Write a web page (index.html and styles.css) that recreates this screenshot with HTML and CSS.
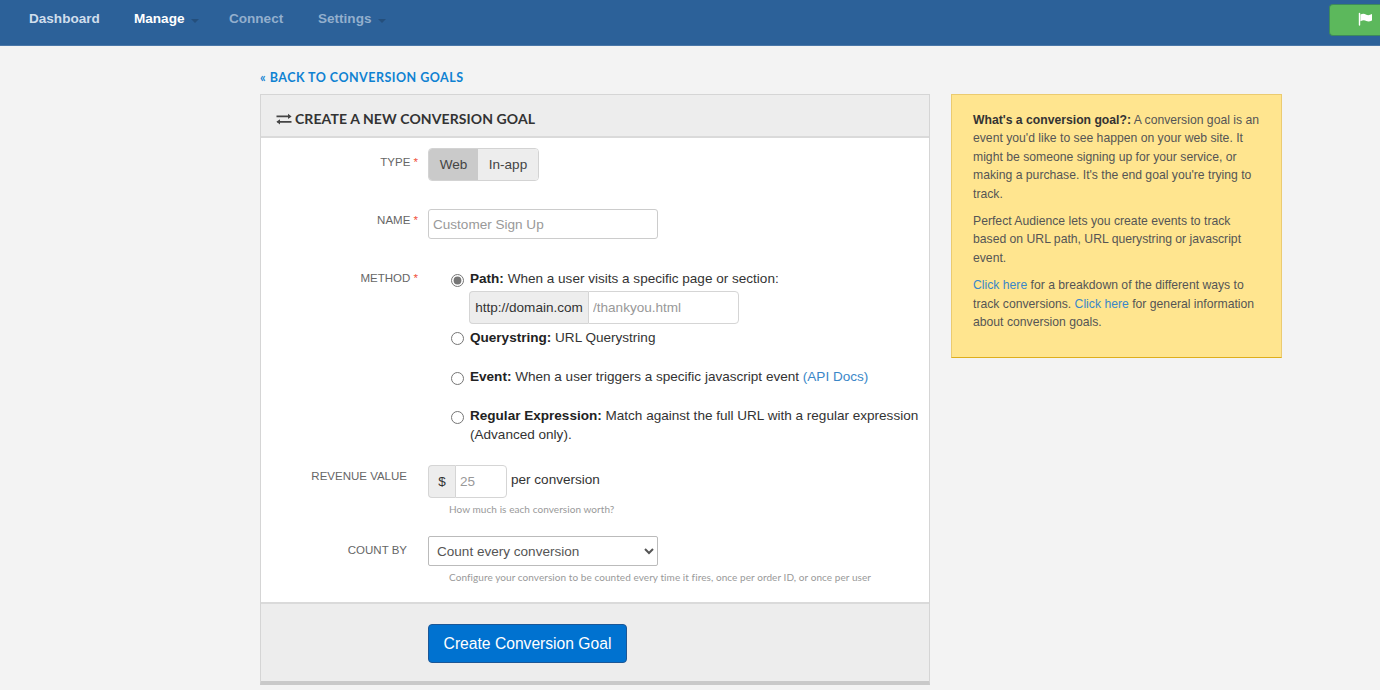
FILE: index.html
```html
<!DOCTYPE html>
<html lang="en">
<head>
  <meta charset="UTF-8" />
  <meta name="viewport" content="width=device-width, initial-scale=1.0"/>
  <title>Create a New Conversion Goal</title>
  <link rel="stylesheet" href="styles.css">
</head>
<body>

  <header class="navbar">
    <nav class="nav-links">
      <a class="nav-dashboard">Dashboard</a>
      <a class="nav-manage">Manage <span class="caret"></span></a>
      <a class="nav-connect">Connect</a>
      <a class="nav-settings">Settings <span class="caret"></span></a>
    </nav>
    <a class="flag-btn">
      <svg width="15" height="14" viewBox="0 0 15 14">
        <path d="M1.5 1.5V13" stroke="#fff" stroke-width="1.4" stroke-linecap="round"/>
        <path d="M2.4 2.6C5 1.3 6.5 1.8 8.3 2.7C10 3.5 11.8 3.1 14 2.1V8.4C11.8 9.6 10 9.8 8.3 9C6.5 8.1 5 8.1 2.4 9.2Z" fill="#fff"/>
      </svg>
    </a>
  </header>

  <main class="page">
    <div class="main-col">
      <a class="back-link">« Back to Conversion Goals</a>

      <form class="panel">
        <div class="panel-header">
          <svg class="exchange" width="16" height="12" viewBox="0 0 16 12">
            <path d="M0.5 3.4H14M1.5 8.8H15.5" stroke="#444" stroke-width="1.8" fill="none"/>
            <path d="M12 0.8L15.6 3.4L12 6ZM4 6.2L0.4 8.8L4 11.4Z" fill="#444"/>
          </svg>
          <h2>Create a New Conversion Goal</h2>
        </div>

        <div class="panel-body">
          <div class="row row-type">
            <label>Type <span class="star">*</span></label>
            <div class="btn-group">
              <button type="button" class="active">Web</button>
              <button type="button">In-app</button>
            </div>
          </div>

          <div class="row row-name">
            <label for="goal-name">Name <span class="star">*</span></label>
            <input type="text" id="goal-name" class="field" placeholder="Customer Sign Up" />
          </div>

          <div class="row row-method">
            <label>Method <span class="star">*</span></label>
            <div class="options">
              <div class="option option-path">
                <input type="radio" name="method" checked />
                <div>
                  <p><b>Path:</b> When a user visits a specific page or section:</p>
                  <div class="input-group">
                    <span class="addon">http://domain.com</span>
                    <input type="text" class="path-input" placeholder="/thankyou.html" />
                  </div>
                </div>
              </div>
              <div class="option">
                <input type="radio" name="method" />
                <p><b>Querystring:</b> URL Querystring</p>
              </div>
              <div class="option">
                <input type="radio" name="method" />
                <p><b>Event:</b> When a user triggers a specific javascript event <a>(API Docs)</a></p>
              </div>
              <div class="option">
                <input type="radio" name="method" />
                <p><b>Regular Expression:</b> Match against the full URL with a regular expression<br>(Advanced only).</p>
              </div>
            </div>
          </div>

          <div class="row row-revenue">
            <label class="optional">Revenue Value</label>
            <div>
              <div class="revenue">
                <div class="input-group">
                  <span class="addon">$</span>
                  <input type="text" class="revenue-input" placeholder="25" />
                </div>
                <span class="per">per conversion</span>
              </div>
              <p class="help">How much is each conversion worth?</p>
            </div>
          </div>

          <div class="row row-count">
            <label class="optional">Count By</label>
            <div>
              <select class="field">
                <option>Count every conversion</option>
              </select>
              <p class="help">Configure your conversion to be counted every time it fires, once per order ID, or once per user</p>
            </div>
          </div>
        </div>

        <div class="panel-footer">
          <button type="submit" class="submit-btn">Create Conversion Goal</button>
        </div>
      </form>
    </div>

    <aside class="tip">
      <p><b>What's a conversion goal?:</b> A conversion goal is an<br>event you'd like to see happen on your web site. It<br>might be someone signing up for your service, or<br>making a purchase. It's the end goal you're trying to<br>track.</p>
      <p>Perfect Audience lets you create events to track<br>based on URL path, URL querystring or javascript<br>event.</p>
      <p><a>Click here</a> for a breakdown of the different ways to<br>track conversions. <a>Click here</a> for general information<br>about conversion goals.</p>
    </aside>
  </main>

</body>
</html>
```
FILE: styles.css
```css
* {
  margin: 0;
  padding: 0;
  box-sizing: border-box;
}

body {
  background: #f3f3f3;
  color: #333;
  font-family: "Liberation Sans", Arial, sans-serif;
  font-size: 13.55px;
  line-height: 18.4px;
  height: 690px;
  overflow: hidden;
}

input,
select,
button {
  font-family: inherit;
  font-size: inherit;
  color: #555;
}

a {
  color: #3a87c8;
  white-space: nowrap;
}

p {
  white-space: nowrap;
}

.navbar {
  display: flex;
  justify-content: space-between;
  height: 46px;
  background: #2c6199;
  border-bottom: 1px solid #4a77a8;
}

.nav-links {
  display: flex;
  padding: 10px 0 0 29px;
  font-weight: bold;
}

.nav-links a {
  color: #93afcd;
}

.nav-links .nav-dashboard {
  width: 105px;
  color: #d0deec;
}

.nav-links .nav-manage {
  width: 95px;
  color: #fff;
}

.nav-links .nav-connect {
  width: 89px;
}

.caret {
  display: inline-block;
  margin-left: 3px;
  border: 4px solid transparent;
  border-top-color: #244f7c;
  border-bottom: 0;
  vertical-align: 0;
}

.flag-btn {
  width: 51px;
  height: 32px;
  margin-top: 4px;
  padding: 7px 0 0 28px;
  background: #5cb85c;
  border: 1px solid #3d8a5c;
  border-right: 0;
  border-radius: 4px 0 0 4px;
}

.flag-btn svg {
  display: block;
}

.page {
  display: flex;
  align-items: flex-start;
  gap: 21px;
  padding: 22px 0 0 260px;
}

.main-col {
  width: 670px;
}

.back-link {
  display: block;
  height: 26px;
  color: #0f82d2;
  font: bold 12.5px/20px Lato, sans-serif;
  letter-spacing: 0.48px;
  text-transform: uppercase;
}

.panel {
  border: 1px solid #d5d5d5;
  border-bottom: 4px solid #c9c9c9;
  background: #fff;
}

.panel-header {
  display: flex;
  align-items: center;
  gap: 3px;
  height: 43px;
  padding: 6px 0 0 15px;
  background: #ededed;
  border-bottom: 2px solid #dadada;
}

.panel-header h2 {
  font: bold 14px/18px Lato, sans-serif;
  letter-spacing: 0.1px;
  text-transform: uppercase;
  white-space: nowrap;
}

.panel-body {
  height: 464px;
  padding-top: 10px;
}

.row {
  display: flex;
  align-items: flex-start;
  gap: 10px;
}

.row > label {
  width: 157px;
  font-size: 11.5px;
  color: #666;
  text-align: right;
  text-transform: uppercase;
}

.row > label.optional {
  padding-right: 11px;
}

.star {
  color: #f0503c;
}

.row-type {
  height: 61px;
}

.row-type label {
  padding-top: 5px;
}

.row-name {
  height: 61px;
}

.row-name label {
  padding-top: 2px;
}

.row-method {
  height: 195px;
}

.row-method label {
  line-height: 17px;
}

.row-revenue {
  height: 71px;
}

.row-revenue label {
  padding-top: 2px;
}

.row-count label {
  padding-top: 5px;
}

.btn-group {
  display: flex;
  height: 33px;
  border: 1px solid #d3d3d3;
  border-radius: 4px;
  overflow: hidden;
}

.btn-group button {
  width: 60px;
  border: 0;
  background: #ededed;
  color: #444;
}

.btn-group .active {
  width: 49px;
  background: #cacaca;
}

.field {
  display: block;
  width: 230px;
  height: 30px;
  padding: 0 4px;
  background: #fff;
  border: 1px solid #ccc;
  border-radius: 3px;
}

::placeholder {
  color: #999;
}

select.field {
  border-color: #bbb;
  border-radius: 2px;
}

.options {
  padding-left: 23px;
}

.option {
  display: flex;
  align-items: flex-start;
  gap: 6px;
  margin-bottom: 20.8px;
}

.option > input {
  width: 13px;
  height: 13px;
  margin-top: 3.5px;
  accent-color: #767676;
}

.option b {
  color: #222;
}

.option-path {
  margin-bottom: 4.5px;
}

.input-group {
  display: flex;
}

.option .input-group {
  margin: 3px 0 0 -1px;
}

.addon {
  height: 33px;
  padding: 0 5px;
  background: #ededed;
  border: 1px solid #d5d5d5;
  border-right: 0;
  border-radius: 4px 0 0 4px;
  line-height: 31px;
  text-align: center;
}

.option .addon {
  width: 119px;
}

.input-group input {
  height: 33px;
  padding: 0 4px;
  border: 1px solid #d5d5d5;
  border-radius: 0 4px 4px 0;
}

.path-input {
  width: 151px;
}

.revenue {
  display: flex;
  gap: 4px;
}

.revenue .addon {
  width: 27px;
}

.revenue-input {
  width: 52px;
}

.per {
  padding-top: 6px;
}

.help {
  margin-top: 4px;
  padding-left: 21px;
  color: #999;
  font: 10px/14px Lato, sans-serif;
  letter-spacing: 0.07px;
}

.panel-footer {
  height: 79px;
  padding: 20px 0 0 167px;
  background: #ededed;
  border-top: 2px solid #dadada;
}

.submit-btn {
  width: 199px;
  height: 39px;
  background: #0072d0;
  border: 1px solid #1c5796;
  border-radius: 4px;
  color: #fff;
  font-size: 15.65px;
}

.tip {
  width: 331px;
  height: 264px;
  margin-top: 26px;
  padding: 16px 21px;
  background: #ffe58f;
  border: 1px solid #ebcb70;
  border-bottom-color: #deae1c;
  color: #555;
  font-size: 12.2px;
}

.tip p {
  margin-bottom: 9px;
}

.tip b {
  color: #333;
}
```
